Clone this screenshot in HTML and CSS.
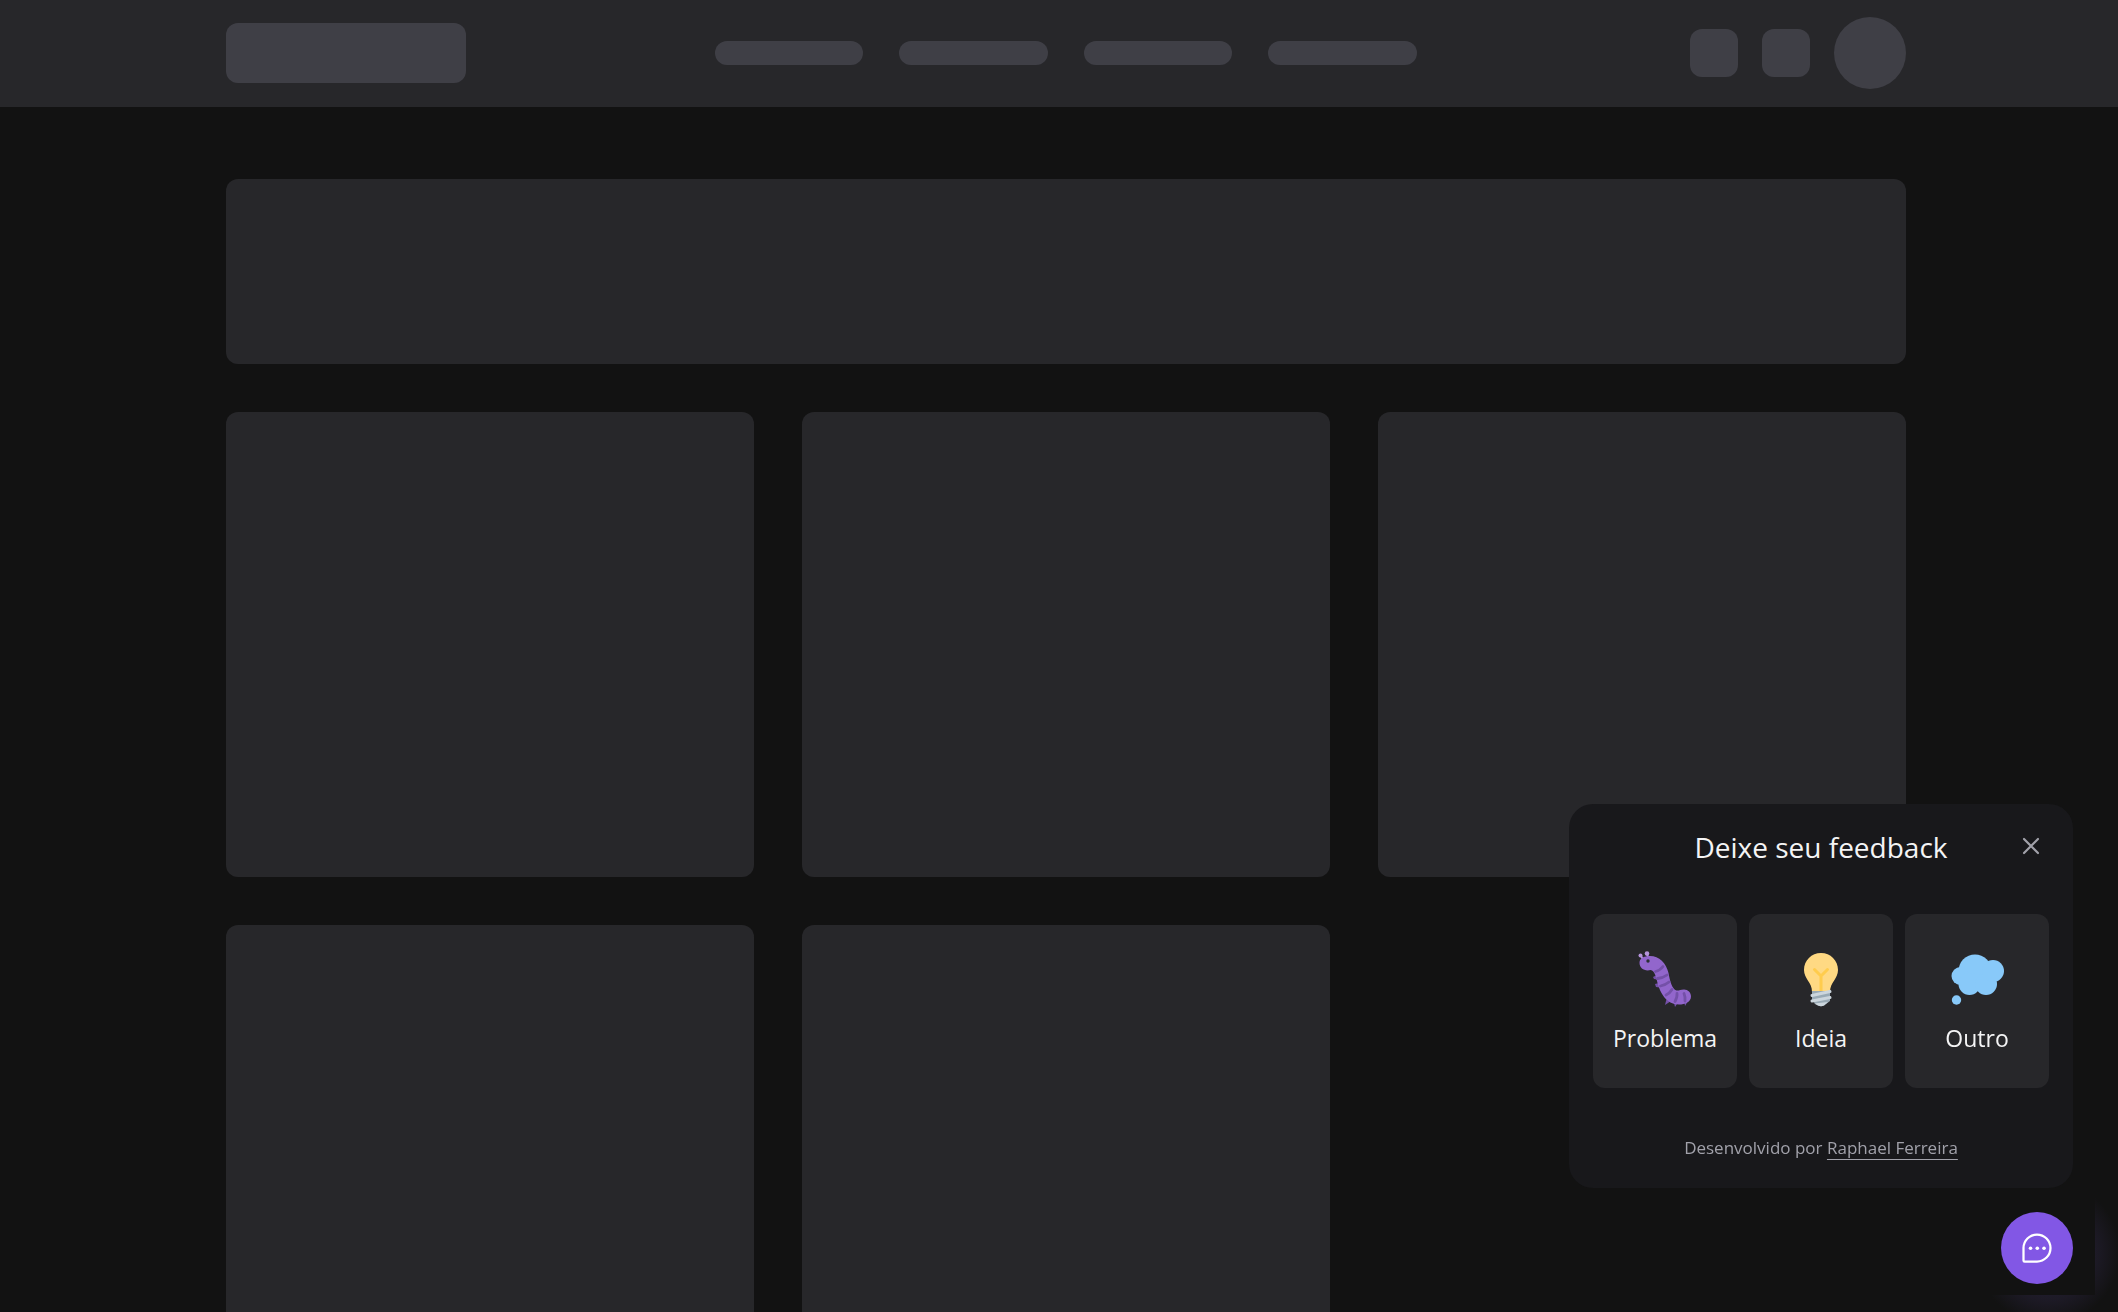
FILE: index.html
```html
<!DOCTYPE html>
<html lang="pt-BR">
<head>
<meta charset="utf-8">
<title>Feedback</title>
<link rel="stylesheet" href="styles.css">
</head>
<body>
<header class="topbar">
  <div class="container topbar-inner">
    <div class="logo"></div>
    <nav class="menu" aria-label="Principal">
      <span class="menu-item"></span>
      <span class="menu-item"></span>
      <span class="menu-item"></span>
      <span class="menu-item"></span>
    </nav>
    <div class="actions">
      <span class="action"></span>
      <span class="action"></span>
      <span class="avatar"></span>
    </div>
  </div>
</header>
<main class="content">
  <div class="container sections">
    <section class="banner"></section>
    <div class="cards">
      <article class="card"></article>
      <article class="card"></article>
      <article class="card"></article>
      <article class="card"></article>
      <article class="card"></article>
    </div>
  </div>
</main>
<div class="glow"></div>
<aside class="widget">
  <section class="panel" aria-labelledby="panel-title">
    <header class="panel-header">
      <h1 class="panel-title" id="panel-title">Deixe seu feedback</h1>
      <button class="close" type="button" aria-label="Fechar">
        <svg viewBox="0 0 24 24" width="24" height="24" fill="none" stroke="currentColor" stroke-width="2.2" stroke-linecap="round"><path d="M5 4l14 14M19 4l-14 14"/></svg>
      </button>
    </header>
    <div class="options">
      <button class="option" type="button">
        <svg class="option-icon" viewBox="-3 -1 60 60" aria-hidden="true">
          <g fill="#7450a8"><path d="M19 26l-4 2 1 2 6 1zM21 34l-4 1 1 3 7 1zM29 48l-2 8 6-4zM35 50l2 8 4-6zM46 50l1 7 3-5z"/></g>
          <g fill="none" stroke="#b594db" stroke-width="2" stroke-linecap="round"><path d="M3 7l3 5M9 5l2 6"/></g>
          <circle cx="2.500" cy="6.500" r="2" fill="#b594db"/><circle cx="9" cy="4.500" r="2.300" fill="#b594db"/>
          <path fill="#9266cc" d="M8 7.500C19 5 28 13 30.500 24C32 32 34 40 38.500 41.500C41 42 42 40.500 46 40.500C50 40.500 53 43.500 53 47.500C53 53 47 55.500 41 55.500C28 55.500 22 43 19.500 34C18 28 17 22 12.500 21C7 22.500 1.500 19.500 1.500 14C1.500 10.500 4 8 8 7.500Z"/>
          <circle cx="10" cy="12" r="1.700" fill="#292f33"/>
          <g fill="none" stroke="#7450a8" stroke-width="2.800" stroke-linecap="round"><path d="M17.500 22.500Q22 21.500 25 17.500M19.500 29.500Q25 29 29 26M22.500 37Q27.500 36 31 33M28 46Q32 44 34 40.500M37 52.500Q39.500 48 39 44.500M47 52Q47.500 48 46 44.500"/></g>
        </svg>
        <span class="option-label">Problema</span>
      </button>
      <button class="option" type="button">
        <svg class="option-icon" viewBox="-3 -1 60 60" aria-hidden="true">
          <path fill="#ffd983" d="M27 4C17.500 4 10 11.500 10 21C10 30 18 33 18 43H36C36 33 44 30 44 21C44 11.500 36.500 4 27 4Z"/>
          <path d="M20.500 20.500L27 27L33.500 20.500M27 27V43" fill="none" stroke="#ffcc4d" stroke-width="3" stroke-linecap="round" stroke-linejoin="round"/>
          <path fill="#99aab5" d="M18 42H36V52L30 56.500Q27 58 24 56.500L18 52Z"/>
          <path d="M18 46.500L36 42.500M18 52L36 48.500" fill="none" stroke="#ccd6dd" stroke-width="3" stroke-linecap="round"/>
          <path fill="#ccd6dd" d="M20 54.500L34 53L30 56.500Q27 58 24 56.500Z"/>
        </svg>
        <span class="option-label">Ideia</span>
      </button>
      <button class="option" type="button">
        <svg class="option-icon" viewBox="-3 -1 60 60" aria-hidden="true">
          <g fill="#88c9f9"><circle cx="25" cy="22" r="16.500"/><circle cx="10.500" cy="27" r="9"/><circle cx="19.500" cy="35" r="11"/><circle cx="36" cy="35" r="11"/><circle cx="43" cy="22" r="11"/><circle cx="6.500" cy="51" r="4.700"/></g>
        </svg>
        <span class="option-label">Outro</span>
      </button>
    </div>
    <footer class="credit">Desenvolvido por <a class="credit-link" href="#">Raphael Ferreira</a></footer>
  </section>
  <button class="fab" type="button" aria-label="Abrir feedback">
    <svg viewBox="0 0 256 256" width="36" height="36" aria-hidden="true"><path d="M128 32a96 96 0 0 1 0 192H40a8 8 0 0 1-8-8V128a96 96 0 0 1 96-96Z" fill="none" stroke="#fff" stroke-width="16"/><g fill="#fff"><circle cx="82" cy="130" r="13"/><circle cx="130" cy="130" r="13"/><circle cx="178" cy="130" r="13"/></g></svg>
  </button>
</aside>
</body>
</html>
```
FILE: styles.css
```css
* { box-sizing: border-box; }

body {
  margin: 0;
  height: 100vh;
  overflow: hidden;
  background: #121212;
  color: #f4f4f5;
  font-family: "Segoe UI", "Open Sans", "Noto Sans", sans-serif;
}

button { margin: 0; padding: 0; border: 0; font: inherit; color: inherit; cursor: pointer; }
svg { display: block; }

.topbar, .content { padding-left: 13px; }
.topbar { background: #27272a; }
.container { width: 100%; max-width: 1680px; margin: 0 auto; }

.topbar-inner {
  display: grid;
  grid-template-columns: 1fr minmax(0, 702px) 1fr;
  align-items: center;
  padding: 17px 0 18px;
}
.logo { width: 240px; height: 60px; border-radius: 12px; background: #3f3f46; }
.menu { display: flex; gap: 36px; }
.menu-item { flex: 1; height: 24px; border-radius: 12px; background: #3f3f46; }
.actions { display: flex; gap: 24px; align-items: center; justify-content: flex-end; }
.action { width: 48px; height: 48px; border-radius: 12px; background: #3f3f46; }
.avatar { width: 72px; height: 72px; border-radius: 50%; background: #3f3f46; }

.content { padding-top: 72px; }
.sections { display: flex; flex-direction: column; gap: 48px; }
.banner { height: 185px; border-radius: 12px; background: #27272a; }
.cards { display: grid; grid-template-columns: repeat(3, 1fr); gap: 48px; }
.card { height: 465px; border-radius: 12px; background: #27272a; }

/* Soft violet light along the corner edges, behind the widget */
.glow {
  position: fixed;
  right: 0;
  bottom: 0;
  width: 150px;
  height: 140px;
  background: radial-gradient(circle at 80px 80px, #2a2440 0, #1d1a26 48px, #121212 72px);
}
.glow::after {
  content: "";
  position: absolute;
  inset: 0 23px 17px 0;
  background: #121212;
}

.widget {
  position: fixed;
  right: 45px;
  bottom: 28px;
  display: flex;
  flex-direction: column;
  align-items: flex-end;
  gap: 24px;
}
.panel {
  width: 504px;
  padding: 24px;
  border-radius: 24px;
  background: #18181b;
}
.panel-header {
  display: grid;
  grid-template-columns: 36px 1fr 36px;
  align-items: center;
}
.panel-title {
  grid-column: 2;
  margin: 0;
  font-size: 28px;
  font-weight: 400;
  line-height: 38px;
  text-align: center;
}
.close { display: grid; place-items: center; height: 36px; background: none; color: #a1a1aa; }

.options { display: flex; gap: 12px; padding: 48px 0 46px; }
.option {
  flex: 1;
  display: flex;
  flex-direction: column;
  align-items: center;
  gap: 12px;
  height: 174px;
  padding: 34px 0 0;
  border-radius: 12px;
  background: #27272a;
}
.option-icon { width: 60px; height: 60px; }
.option-label { font-size: 23px; line-height: 36px; }

.credit { padding-bottom: 2px; font-size: 17px; line-height: 28px; text-align: center; color: #a1a1aa; }
.credit-link { color: inherit; text-decoration: underline; text-underline-offset: 5px; }

.fab {
  display: grid;
  place-items: center;
  width: 72px;
  height: 72px;
  border-radius: 50%;
  background: #8257e5;
}
```
